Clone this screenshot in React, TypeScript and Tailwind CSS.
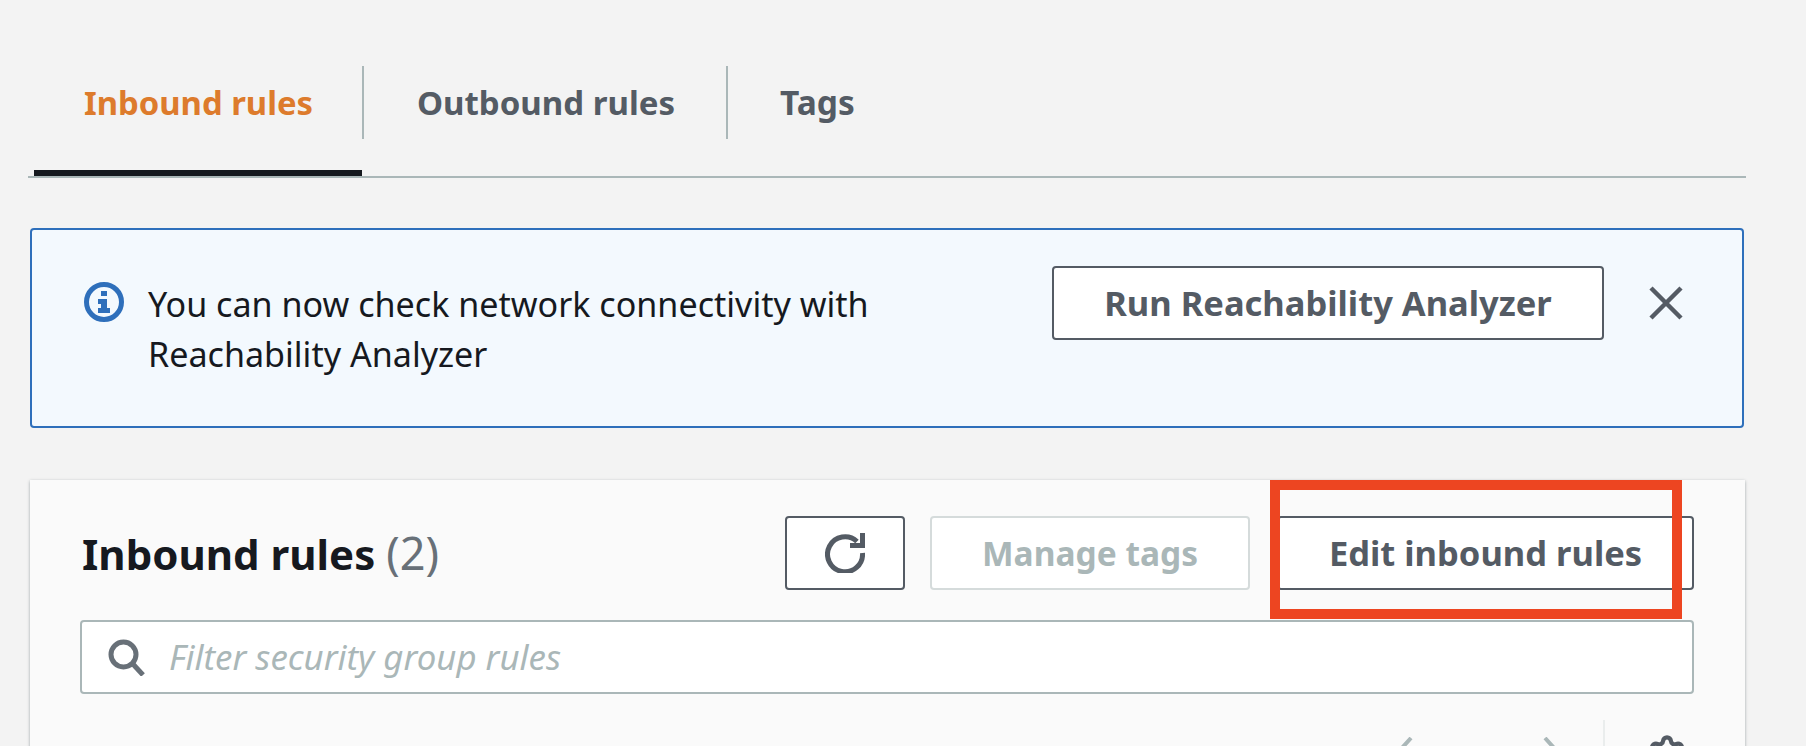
import { Settings } from "lucide-react";

const font = { fontFamily: '"Noto Sans", sans-serif' };

function InfoIcon() {
  return (
    <svg width="40" height="40" viewBox="0 0 40 40" fill="none" className="shrink-0 mt-[16px]">
      <circle cx="20" cy="20" r="17.5" stroke="#2e6fbb" strokeWidth="5" />
      <rect x="17" y="9" width="6" height="5" fill="#2e6fbb" />
      <path d="M14 17h9v9h3v5H14v-5h3v-4h-3z" fill="#2e6fbb" />
    </svg>
  );
}

function RefreshIcon() {
  return (
    <svg width="40" height="40" viewBox="0 0 40 40" fill="none">
      <path d="M32 8.5A17.5 17.5 0 1 0 37.5 20" stroke="#545b64" strokeWidth="5" />
      <path d="M40 0v15H25v-5h10V0z" fill="#545b64" />
    </svg>
  );
}

function SearchIcon() {
  return (
    <svg width="37" height="37" viewBox="0 0 37 37" fill="none" className="shrink-0">
      <circle cx="15.5" cy="15.5" r="12.5" stroke="#687078" strokeWidth="5" />
      <path d="M24 24l11 12" stroke="#687078" strokeWidth="5" />
    </svg>
  );
}

function CloseIcon() {
  return (
    <svg width="34" height="34" viewBox="0 0 34 34" fill="none" className="shrink-0 mt-[20px]">
      <path d="M2 2l30 30M32 2L2 32" stroke="#545b64" strokeWidth="4.5" />
    </svg>
  );
}

export default function App() {
  return (
    <div className="relative h-[746px] w-[1806px] overflow-hidden bg-[#f3f3f3]" style={font}>
      {/* Tabs */}
      <div className="ml-[28px] w-[1718px] pt-[66px] border-b-2 border-[#aab7b8] flex items-start h-[110px] box-content">
        <div className="ml-[6px] w-[330px] h-[110px] flex flex-col justify-between">
          <div className="h-[73px] border-r-2 border-[#aab7b8] flex items-center pl-[50px] text-[32.8px] font-bold text-[#dd7b2c]">
            Inbound rules
          </div>
          <div className="h-[6px] w-[328px] bg-[#16191f]" />
        </div>
        <div className="w-[364px] h-[73px] border-r-2 border-[#aab7b8] flex items-center pl-[53px] text-[33px] font-bold text-[#545b64]">
          Outbound rules
        </div>
        <div className="h-[73px] flex items-center pl-[52px] text-[33.5px] font-bold text-[#545b64]">Tags</div>
      </div>

      {/* Reachability notice */}
      <div className="ml-[30px] mt-[50px] w-[1714px] h-[200px] border-2 border-[#2e6fbb] rounded-[4px] bg-[#f3f9fe] flex items-start pt-[36px] pl-[52px] pr-[59px]">
        <InfoIcon />
        <p className="ml-[24px] mt-[13px] w-[800px] text-[34.1px] leading-[50px] text-[#16191f]">
          You can now check network connectivity with
          <br />
          Reachability Analyzer
        </p>
        <button className="ml-auto w-[552px] h-[74px] border-2 border-[#545b64] rounded-[4px] bg-white text-[34.5px] font-bold text-[#545b64]">
          Run Reachability Analyzer
        </button>
        <div className="ml-[45px]">
          <CloseIcon />
        </div>
      </div>

      {/* Rules panel */}
      <div className="ml-[30px] mt-[52px] w-[1715px] h-[400px] bg-[#fafafa] shadow-[0_1px_3px_rgba(0,28,36,0.35)] pl-[50px] pr-[51px] pt-[36px]">
        <div className="flex items-center h-[74px]">
          <h2 className="ml-[2px] text-[42px] font-bold text-[#16191f]">
            Inbound rules <span className="font-normal text-[45px] text-[#687078]">(2)</span>
          </h2>
          <div className="ml-auto flex">
            <button className="w-[120px] h-[74px] mr-[25px] border-2 border-[#545b64] rounded-[4px] bg-white flex items-center justify-center">
              <RefreshIcon />
            </button>
            <button className="w-[320px] h-[74px] mr-[27px] border-2 border-[#d5dbdb] rounded-[4px] bg-white text-[33.5px] font-bold text-[#aab7b8]">
              Manage tags
            </button>
            <button className="w-[417px] h-[74px] border-2 border-[#545b64] rounded-[4px] bg-white text-[34.5px] font-bold text-[#545b64]">
              Edit inbound rules
            </button>
          </div>
        </div>
        <div className="mt-[30px] h-[74px] border-2 border-[#aab7b8] rounded-[4px] bg-white flex items-center pl-[26px] gap-[24px]">
          <SearchIcon />
          <span className="text-[34.8px] italic text-[#aab7b8]">Filter security group rules</span>
        </div>
        <div className="mt-[26px] flex justify-end items-start">
          <svg width="14" height="40" viewBox="0 0 14 40" fill="none" className="mt-[17px]">
            <path d="M12 1L2 12l10 11" stroke="#aab7b8" strokeWidth="4" />
          </svg>
          <span className="ml-[58px] mt-[17px] text-[32px] font-bold leading-[40px] text-[#16191f]">1</span>
          <svg width="14" height="40" viewBox="0 0 14 40" fill="none" className="ml-[54px] mt-[17px]">
            <path d="M2 1l10 11L2 23" stroke="#aab7b8" strokeWidth="4" />
          </svg>
          <div className="ml-[46px] h-[60px] w-[2px] bg-[#eaeded]" />
          <Settings size={40} strokeWidth={2.6} color="#545b64" className="ml-[42px] mt-[14px] mr-[7px]" />
        </div>
      </div>

      {/* Screenshot annotation over the edit button */}
      <div className="absolute left-[1270px] top-[480px] w-[412px] h-[139px] border-[10px] border-[#ed4521]" />
    </div>
  );
}
